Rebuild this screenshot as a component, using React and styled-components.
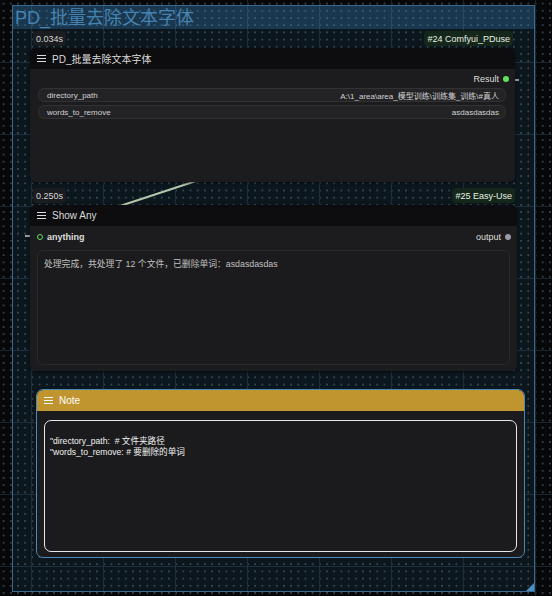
import styled, { createGlobalStyle } from "styled-components"

const GlobalStyle = createGlobalStyle`
    html, body {
        margin: 0;
        padding: 0;
        background: #050607;
    }
    * {
        box-sizing: border-box;
    }
`;

const FONT = `"Liberation Sans", Arial, "Noto Sans CJK SC", sans-serif`;

const Canvas = styled.div`
    position: relative;
    width: 552px;
    height: 596px;
    overflow: hidden;
    font-family: ${FONT};
    background-color: #060708;
    background-image:
        linear-gradient(to right, #1b232b 1px, transparent 1px),
        linear-gradient(to bottom, #1b232b 1px, transparent 1px),
        radial-gradient(circle, #3b4045 0.9px, transparent 1.2px);
    background-size: 72px 72px, 72px 72px, 7.2px 7.2px;
    background-position: 31px 62px, 31px 62px, 0 0;
`;

const Group = styled.div`
    position: absolute;
    left: 12px;
    top: 5px;
    width: 523px;
    height: 587px;
    border: 1px solid #3a6a8f;
    background: rgba(50, 120, 180, 0.13);
`;

const GroupTitle = styled.div`
    height: 23px;
    padding-left: 2px;
    display: flex;
    align-items: center;
    background: rgba(60, 135, 195, 0.3);
    color: #4682b0;
    font-size: 18px;
    line-height: 1;
`;

const Resize = styled.div`
    position: absolute;
    right: 0;
    bottom: 0;
    width: 0;
    height: 0;
    border-left: 8px solid transparent;
    border-bottom: 8px solid #4d8fc4;
`;

const NodeWrap = styled.div`
    position: absolute;
    left: ${({ $x }) => $x}px;
    top: ${({ $y }) => $y}px;
    width: ${({ $w }) => $w}px;
    display: flex;
    flex-direction: column;
`;

const BadgeRow = styled.div`
    height: 17px;
    display: flex;
    justify-content: space-between;
    align-items: flex-start;
    padding: 0 2px 0 3px;
`;

const Badge = styled.div`
    height: 15px;
    padding: 0 3px;
    border-radius: 4px;
    display: flex;
    align-items: center;
    font-size: 9px;
    color: ${({ $green }) => ($green ? "#e4f0e2" : "#d6d6d6")};
    background: ${({ $green }) => ($green ? "#15271a" : "#1a1c1f")};
`;

const Node = styled.div`
    height: ${({ $h }) => $h}px;
    border-radius: 6px;
    background: #1c1c1e;
    display: flex;
    flex-direction: column;
    overflow: hidden;
    box-shadow: 0 1px 3px rgba(0, 0, 0, 0.5);
`;

const TitleBar = styled.div`
    height: 21px;
    flex-shrink: 0;
    display: flex;
    align-items: center;
    gap: 6px;
    padding-left: 7px;
    background: ${({ $bg }) => $bg || "#0d0d0f"};
    color: ${({ $color }) => $color || "#dcdcdc"};
    font-size: 10px;
`;

const Burger = styled.span`
    display: flex;
    flex-direction: column;
    gap: 2px;
    width: 9px;
    span {
        height: 1px;
        background: currentColor;
    }
`;

const Menu = () => (
    <Burger>
        <span />
        <span />
        <span />
    </Burger>
);

const SlotRow = styled.div`
    display: flex;
    align-items: center;
    justify-content: space-between;
    height: 14px;
    padding: 0 6px 0 7px;
    margin-top: ${({ $mt }) => $mt || 0}px;
    font-size: 9px;
    color: #dcdcdc;
`;

const SlotLabel = styled.div`
    display: flex;
    align-items: center;
    gap: 4px;
    font-weight: ${({ $bold }) => ($bold ? 700 : 400)};
`;

const Dot = styled.span`
    width: 6px;
    height: 6px;
    border-radius: 50%;
    border: ${({ $ring }) => ($ring ? "1.5px solid #5fdc5f" : "none")};
    background: ${({ $ring, $color }) => ($ring ? "transparent" : $color)};
`;

const Widgets = styled.div`
    display: flex;
    flex-direction: column;
    gap: 3px;
    padding: 2px 9px 0 8px;
`;

const Widget = styled.div`
    height: 14px;
    border-radius: 6px;
    background: #232325;
    border: 1px solid #323234;
    display: flex;
    align-items: center;
    justify-content: space-between;
    padding: 0 6px 0 8px;
    font-size: 8px;
    color: #d2d2d2;
`;

const TextBox = styled.div`
    flex: 1;
    margin: 6px 7px 6px 7px;
    border-radius: 6px;
    background: #1b1b1d;
    border: 1px solid #2a2a2c;
    padding: 6px 6px;
    font-size: 8.8px;
    color: #c0c0c0;
`;

const NoteWrap = styled.div`
    position: absolute;
    left: 37px;
    top: 390px;
    width: 487px;
    height: 167px;
    border-radius: 6px;
    outline: 1px solid #4b87b8;
    background: #1b1b1d;
    display: flex;
    flex-direction: column;
    overflow: hidden;
`;

const NoteText = styled.div`
    flex: 1;
    margin: 9px 7px 5px 7px;
    border: 1.5px solid #e8e8e8;
    border-radius: 7px;
    background: #1b1b1d;
    padding: 15px 5px;
    font-size: 8.6px;
    line-height: 11px;
    color: #f2f2f2;
    white-space: pre;
`;

const Links = styled.svg`
    position: absolute;
    left: 0;
    top: 0;
`;

const App = () => {
    return (
        <Canvas>
            <GlobalStyle />
            <Group>
                <GroupTitle>PD_批量去除文本字体</GroupTitle>
                <Resize />
            </Group>

            <Links width="552" height="596">
                <line x1="120" y1="206" x2="196" y2="181" stroke="#b4c6ad" strokeWidth="2" />
                <line x1="513" y1="80" x2="519" y2="80" stroke="#9a9a9a" strokeWidth="2" />
                <line x1="25" y1="236" x2="30" y2="236" stroke="#9a9a9a" strokeWidth="2" />
            </Links>

            <NodeWrap $x={30} $y={31} $w={485}>
                <BadgeRow>
                    <Badge>0.034s</Badge>
                    <Badge $green>#24 Comfyui_PDuse</Badge>
                </BadgeRow>
                <Node $h={134}>
                    <TitleBar>
                        <Menu />
                        PD_批量去除文本字体
                    </TitleBar>
                    <SlotRow $mt={3}>
                        <span />
                        <SlotLabel>
                            Result <Dot $color="#5fe35f" />
                        </SlotLabel>
                    </SlotRow>
                    <Widgets>
                        <Widget>
                            <span>directory_path</span>
                            <span>A:\1_area\area_模型训练\训练集_训练\#真人</span>
                        </Widget>
                        <Widget>
                            <span>words_to_remove</span>
                            <span>asdasdasdas</span>
                        </Widget>
                    </Widgets>
                </Node>
            </NodeWrap>

            <NodeWrap $x={30} $y={188} $w={487}>
                <BadgeRow>
                    <Badge>0.250s</Badge>
                    <Badge $green>#25 Easy-Use</Badge>
                </BadgeRow>
                <Node $h={166}>
                    <TitleBar>
                        <Menu />
                        Show Any
                    </TitleBar>
                    <SlotRow $mt={4}>
                        <SlotLabel $bold>
                            <Dot $ring /> anything
                        </SlotLabel>
                        <SlotLabel>
                            output <Dot $color="#9a98a6" />
                        </SlotLabel>
                    </SlotRow>
                    <TextBox>处理完成，共处理了 12 个文件，已删除单词：asdasdasdas</TextBox>
                </Node>
            </NodeWrap>

            <NoteWrap>
                <TitleBar $bg="#c0952f" $color="#ffffff">
                    <Menu />
                    Note
                </TitleBar>
                <NoteText>{`"directory_path:  # 文件夹路径\n"words_to_remove: # 要删除的单词`}</NoteText>
            </NoteWrap>
        </Canvas>
    )
}

export default App
